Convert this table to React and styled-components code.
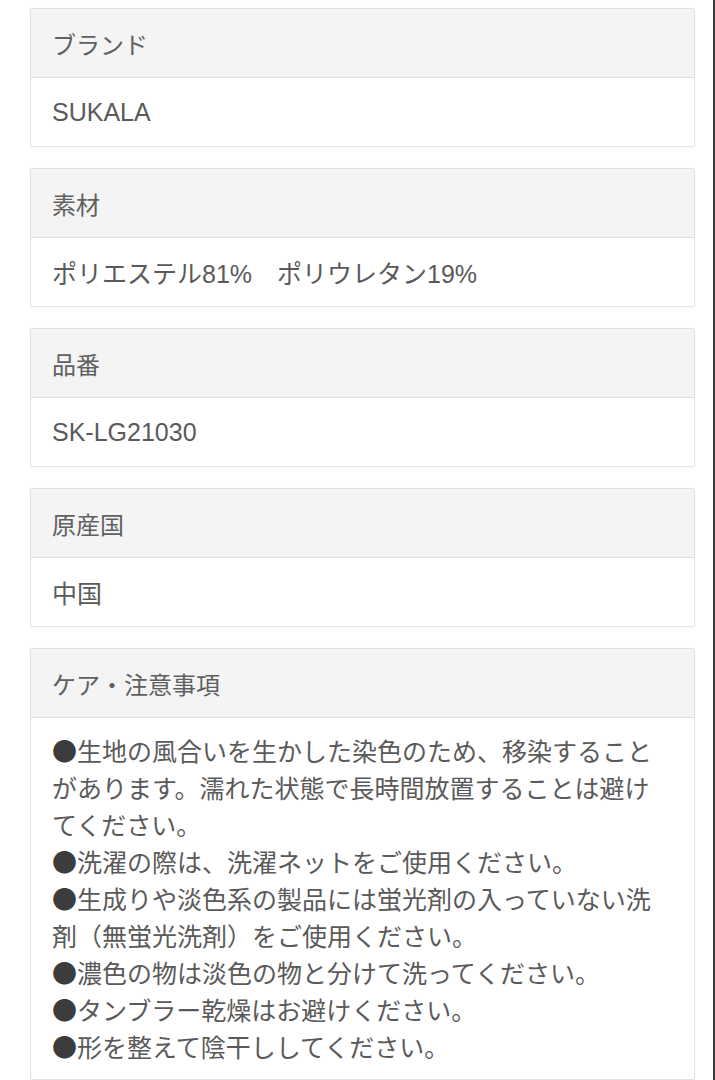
import React from "react";
import styled, { createGlobalStyle } from "styled-components";

const GlobalStyle = createGlobalStyle`
  html, body {
    margin: 0;
    padding: 0;
    background: #ffffff;
  }
  body {
    font-family: "Liberation Sans", "Noto Sans CJK JP", sans-serif;
    color: #5a5a5a;
  }
`;

const Page = styled.div`
  width: 715px;
  min-height: 1080px;
  border-right: 2px solid #3a3a3a;
  box-sizing: border-box;
  padding: 8px 0 0 30px;
  display: flex;
  flex-direction: column;
  gap: 21px;
`;

const Card = styled.section`
  width: 665px;
  box-sizing: border-box;
  border: 1px solid #e2e2e2;
  border-radius: 2px;
  box-shadow: 0 0 2px rgba(0, 0, 0, 0.06);
  background: #ffffff;
`;

const Head = styled.div`
  height: 69px;
  box-sizing: border-box;
  display: flex;
  align-items: center;
  padding: 0 21px;
  background: #f4f4f4;
  border-bottom: 1px solid #e0e0e0;
  font-size: 24px;
  color: #606060;
`;

const Value = styled.div`
  height: 68px;
  box-sizing: border-box;
  display: flex;
  align-items: center;
  padding: 0 21px;
  font-size: 25px;
  color: #5a5a5a;
`;

const Notes = styled.div`
  padding: 14px 21px;
  font-family: "Noto Sans CJK JP", sans-serif;
  font-size: 25px;
  line-height: 37px;
  color: #5a5a5a;
`;

const Line = styled.div`
  white-space: nowrap;
  height: 37px;
`;

const Bullet = styled.span`
  color: #3c3c3c;
`;

const items = [
  { label: "ブランド", value: "SUKALA" },
  { label: "素材", value: "ポリエステル81%　ポリウレタン19%" },
  { label: "品番", value: "SK-LG21030" },
  { label: "原産国", value: "中国" },
];

const notes = [
  { bullet: true, text: "生地の風合いを生かした染色のため、移染すること" },
  { text: "があります。濡れた状態で長時間放置することは避け" },
  { text: "てください。" },
  { bullet: true, text: "洗濯の際は、洗濯ネットをご使用ください。" },
  { bullet: true, text: "生成りや淡色系の製品には蛍光剤の入っていない洗" },
  { text: "剤（無蛍光洗剤）をご使用ください。" },
  { bullet: true, text: "濃色の物は淡色の物と分けて洗ってください。" },
  { bullet: true, text: "タンブラー乾燥はお避けください。" },
  { bullet: true, text: "形を整えて陰干ししてください。" },
];

const App = () => {
  return (
    <>
      <GlobalStyle />
      <Page>
        {items.map((item) => (
          <Card key={item.label}>
            <Head>{item.label}</Head>
            <Value>{item.value}</Value>
          </Card>
        ))}
        <Card>
          <Head>ケア・注意事項</Head>
          <Notes>
            {notes.map((line, index) => (
              <Line key={index}>
                {line.bullet && <Bullet>●</Bullet>}
                {line.text}
              </Line>
            ))}
          </Notes>
        </Card>
      </Page>
    </>
  );
};

export default App;
